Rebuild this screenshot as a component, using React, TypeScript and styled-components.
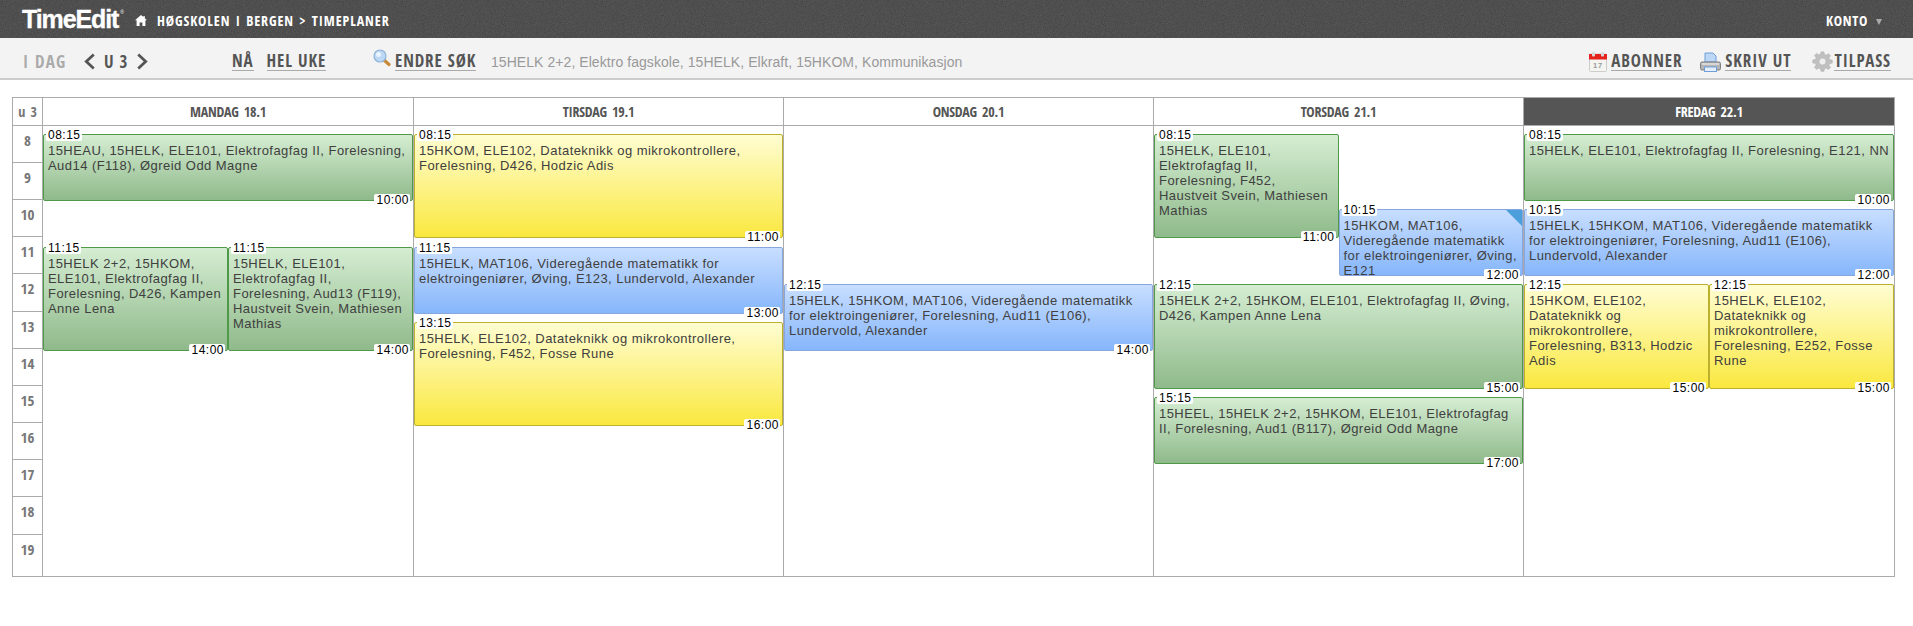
import React from "react";
import styled, { createGlobalStyle } from "styled-components";

const COND = `"Open Sans Condensed", "Liberation Sans Narrow", "Open Sans", sans-serif`;
const SANS = `"Liberation Sans", Arial, sans-serif`;

const Global = createGlobalStyle`
  html, body { margin: 0; padding: 0; background: #fff; }
  * { box-sizing: border-box; }
`;

const noise = `url("data:image/svg+xml,%3Csvg xmlns='http://www.w3.org/2000/svg' width='200' height='200'%3E%3Cfilter id='n'%3E%3CfeTurbulence type='fractalNoise' baseFrequency='1.1' numOctaves='2'/%3E%3CfeColorMatrix values='0 0 0 0 0 0 0 0 0 0 0 0 0 0 0 0 0 0 .35 -.07'/%3E%3C/filter%3E%3Crect width='200' height='200' filter='url(%23n)'/%3E%3C/svg%3E")`;

const Page = styled.div`
  width: 1913px;
  height: 626px;
  overflow: hidden;
  font-family: ${SANS};
`;
const TopBar = styled.header`
  height: 38px;
  background: #585858 ${noise};
  display: flex;
  align-items: center;
  padding: 3px 31px 0 22px;
  color: #fff;
`;
const Logo = styled.div`
  font: bold 25px/1 ${SANS};
  letter-spacing: -1.1px;
  -webkit-text-stroke: 0.3px #fff;
  width: 113px;
  margin-top: -3px;
  white-space: nowrap;
  sup { font-size: 5px; vertical-align: 14px; margin-left: 2px; font-weight: normal; letter-spacing: 0; -webkit-text-stroke: 0; }
`;
const Crumb = styled.div`
  font: bold 14px/1 ${COND};
  font-stretch: condensed;
  letter-spacing: 0.9px;
  margin-left: 10px;
  word-spacing: 1px;
`;
const Account = styled.div`
  margin-left: auto;
  display: flex;
  align-items: center;
  gap: 8px;
  font: bold 14px/1 ${COND};
  font-stretch: condensed;
  letter-spacing: 0.75px;
`;
const Caret = styled.span`
  width: 0;
  height: 0;
  margin-top: 3px;
  border-left: 3px solid transparent;
  border-right: 3px solid transparent;
  border-top: 6px solid #aaa;
`;
const Toolbar = styled.nav`
  height: 42px;
  background: #f3f3f3;
  border-bottom: 2px solid #ccc;
  display: flex;
  align-items: center;
  padding: 7px 22px 0 23px;
  font: bold 17px/1 ${COND};
  font-stretch: condensed;
  color: #555;
  letter-spacing: 0.9px;
`;
const Today = styled.span`
  color: #aaa;
  width: 60px;
  letter-spacing: 1.3px;
`;
const WeekNav = styled.span`
  display: flex;
  align-items: center;
  gap: 8px;
  width: 149px;
  color: #555;
`;
const Link = styled.span`
  border-bottom: 1px solid #aaa;
  padding-bottom: 1px;
`;
const LinkGroup = styled.span<{ $w: number; $gap?: number }>`
  display: flex;
  align-items: center;
  gap: ${(p) => p.$gap ?? 13}px;
  width: ${(p) => p.$w}px;
`;
const Desc = styled.span`
  font: 14px/1 ${SANS};
  color: #999;
  letter-spacing: 0.06px;
  margin-left: 13px;
`;
const Right = styled.div`
  margin-left: auto;
  display: flex;
  align-items: center;
  gap: 18px;
`;
const Tool = styled.span<{ $gap?: number; $before?: number }>`
  display: flex;
  align-items: center;
  gap: ${(p) => p.$gap ?? 4}px;
  margin-left: ${(p) => p.$before ?? 0}px;
  word-spacing: 0;
`;
const Table = styled.div`
  margin: 17px 0 0 12px;
  width: 1883px;
  border: 1px solid #aaa;
  display: grid;
  grid-template-columns: 29px 371px 370px 370px 370px 371px;
  grid-template-rows: 28px 450px;
`;
const HeadCell = styled.div<{ $first?: boolean; $active?: boolean }>`
  border-bottom: 1px solid #aaa;
  border-left: ${(p) => (p.$first ? "none" : "1px solid #aaa")};
  background: ${(p) => (p.$active ? "#555" : "#fff")};
  color: ${(p) => (p.$active ? "#fff" : p.$first ? "#777" : "#555")};
  display: flex;
  align-items: center;
  justify-content: center;
  font: bold 14px/1 ${COND};
  font-stretch: condensed;
  letter-spacing: -0.25px;
  word-spacing: 2px;
`;
const Hours = styled.div`
  display: flex;
  flex-direction: column;
`;
const Hour = styled.div<{ $h: number | null }>`
  ${(p) => (p.$h ? `height: ${p.$h}px;` : "flex: 1;")}
  border-bottom: ${(p) => (p.$h ? "1px solid #aaa" : "none")};
  color: #777;
  font: bold 15px/1 ${COND};
  font-stretch: condensed;
  text-align: center;
  padding-top: 7px;
`;
const Day = styled.div`
  border-left: 1px solid #aaa;
  position: relative;
`;
const colours = {
  green: { top: "#d5edd2", bottom: "#8fba8b", line: "#4f9a48" },
  yellow: { top: "#fffdd2", bottom: "#fae83f", line: "#bdb02c" },
  blue: { top: "#c8deff", bottom: "#86b6fb", line: "#88a6de" },
};
type Kind = keyof typeof colours;
const EventBox = styled.div<{ $k: Kind }>`
  position: absolute;
  border: 1px solid ${(p) => colours[p.$k].line};
  border-radius: 2px;
  background: linear-gradient(${(p) => colours[p.$k].top}, ${(p) => colours[p.$k].bottom});
`;
const EventText = styled.div`
  height: 100%;
  overflow: hidden;
  padding: 8px 3px 0 4px;
  font: 13px/15px ${SANS};
  color: #404040;
  letter-spacing: 0.45px;
`;
const Stamp = styled.span<{ $end?: boolean }>`
  position: absolute;
  background: #fff;
  color: #000;
  font: 12px/12px ${SANS};
  letter-spacing: 0.5px;
  padding: 0 1px 0 2px;
  border-radius: 2px;
  ${(p) => (p.$end ? "right: 2px; bottom: -6px;" : "left: 2px; top: -6px;")}
`;
const Corner = styled.span`
  position: absolute;
  top: 0;
  right: 0;
  width: 0;
  height: 0;
  border-top: 16px solid #4ba0dc;
  border-left: 16px solid transparent;
`;

const HomeIcon = () => (
  <svg width="12" height="11" viewBox="0 0 12 11"><path d="M6 0 0 5.200h1.600V11h3V7.400h2.800V11h3V5.200H12L9.800 3.300V1H8.400v1.100z" fill="#fff" /></svg>
);
const Chevron = ({ left }: { left?: boolean }) => (
  <svg width="13" height="17" viewBox="0 0 12 16" fill="none" stroke="#555" strokeWidth="2.6"><path d={left ? "M10 1.500 3 8l7 6.500" : "M2 1.500 9 8l-7 6.500"} /></svg>
);
const Magnifier = () => (
  <svg width="18" height="18" viewBox="0 0 18 18" style={{ marginTop: -7 }}>
    <path d="M10.500 10.500 16 15.500" stroke="#c98a3c" strokeWidth="3.2" strokeLinecap="round" />
    <circle cx="7" cy="7" r="6" fill="#bcd8f4" stroke="#8fb2d8" strokeWidth="1.2" />
    <circle cx="5.5" cy="5.5" r="2.5" fill="#e8f3fd" />
  </svg>
);
const CalendarIcon = () => (
  <svg width="18" height="20" viewBox="0 0 18 20">
    <rect x="0.5" y="2" width="17" height="17.5" rx="1" fill="#f4f4f0" stroke="#ccc" />
    <rect x="0" y="2" width="18" height="5.5" fill="#e5231c" />
    <rect x="3" y="0" width="3" height="4.5" rx="1" fill="#d8d8d8" />
    <rect x="12" y="0" width="3" height="4.5" rx="1" fill="#d8d8d8" />
    <text x="9" y="16" fontSize="7.5" fill="#999" textAnchor="middle" fontFamily="Liberation Sans">17</text>
  </svg>
);
const PrinterIcon = () => (
  <svg width="21" height="20" viewBox="0 0 21 20">
    <path d="M5 1h8l3 3v6H5z" fill="#bcd6f5" stroke="#6f9fda" />
    <path d="M2 10h17a1.500 1.500 0 0 1 1.500 1.500v5a1.500 1.500 0 0 1-1.500 1.500H2a1.500 1.500 0 0 1-1.500-1.500v-5A1.500 1.500 0 0 1 2 10z" fill="#b5b5b5" stroke="#7f7f7f" />
    <rect x="4.5" y="15" width="12" height="4.5" fill="#e6eef9" stroke="#6f9fda" />
    <rect x="2" y="11" width="17" height="2" fill="#d8d8d8" />
  </svg>
);
const GearIcon = () => (
  <svg width="21" height="21" viewBox="0 0 24 24" fill="#c0c0c0" stroke="#a8a8a8" strokeWidth="0.6">
    <path d="M10.300 1h3.400l.5 3 2 .8 2.500-1.800 2.400 2.400-1.800 2.500.8 2 3 .5v3.400l-3 .5-.8 2 1.800 2.500-2.400 2.400-2.500-1.800-2 .8-.5 3h-3.400l-.5-3-2-.8L5.300 21l-2.400-2.400 1.800-2.500-.8-2-3-.5V10.200l3-.5.8-2-1.800-2.500L5.300 2.800l2.500 1.800 2-.8z" />
    <circle cx="12" cy="12" r="4" fill="#efefef" />
  </svg>
);

type Ev = { d: number; s: number; e: number; k: Kind; t: string; slot?: 0 | 1; corner?: boolean };
const hh = (n: number) => `${String(Math.floor(n)).padStart(2, "0")}:${String(Math.round((n % 1) * 60)).padStart(2, "0")}`;
const events: Ev[] = [
  { d: 0, s: 8.25, e: 10, k: "green", t: "15HEAU, 15HELK, ELE101, Elektrofagfag II, Forelesning, Aud14 (F118), Øgreid Odd Magne" },
  { d: 0, s: 11.25, e: 14, k: "green", slot: 0, t: "15HELK 2+2, 15HKOM, ELE101, Elektrofagfag II, Forelesning, D426, Kampen Anne Lena" },
  { d: 0, s: 11.25, e: 14, k: "green", slot: 1, t: "15HELK, ELE101, Elektrofagfag II, Forelesning, Aud13 (F119), Haustveit Svein, Mathiesen Mathias" },
  { d: 1, s: 8.25, e: 11, k: "yellow", t: "15HKOM, ELE102, Datateknikk og mikrokontrollere, Forelesning, D426, Hodzic Adis" },
  { d: 1, s: 11.25, e: 13, k: "blue", t: "15HELK, MAT106, Videregående matematikk for elektroingeniører, Øving, E123, Lundervold, Alexander" },
  { d: 1, s: 13.25, e: 16, k: "yellow", t: "15HELK, ELE102, Datateknikk og mikrokontrollere, Forelesning, F452, Fosse Rune" },
  { d: 2, s: 12.25, e: 14, k: "blue", t: "15HELK, 15HKOM, MAT106, Videregående matematikk for elektroingeniører, Forelesning, Aud11 (E106), Lundervold, Alexander" },
  { d: 3, s: 8.25, e: 11, k: "green", slot: 0, t: "15HELK, ELE101, Elektrofagfag II, Forelesning, F452, Haustveit Svein, Mathiesen Mathias" },
  { d: 3, s: 10.25, e: 12, k: "blue", slot: 1, corner: true, t: "15HKOM, MAT106, Videregående matematikk for elektroingeniører, Øving, E121" },
  { d: 3, s: 12.25, e: 15, k: "green", t: "15HELK 2+2, 15HKOM, ELE101, Elektrofagfag II, Øving, D426, Kampen Anne Lena" },
  { d: 3, s: 15.25, e: 17, k: "green", t: "15HEEL, 15HELK 2+2, 15HKOM, ELE101, Elektrofagfag II, Forelesning, Aud1 (B117), Øgreid Odd Magne" },
  { d: 4, s: 8.25, e: 10, k: "green", t: "15HELK, ELE101, Elektrofagfag II, Forelesning, E121, NN" },
  { d: 4, s: 10.25, e: 12, k: "blue", t: "15HELK, 15HKOM, MAT106, Videregående matematikk for elektroingeniører, Forelesning, Aud11 (E106), Lundervold, Alexander" },
  { d: 4, s: 12.25, e: 15, k: "yellow", slot: 0, t: "15HKOM, ELE102, Datateknikk og mikrokontrollere, Forelesning, B313, Hodzic Adis" },
  { d: 4, s: 12.25, e: 15, k: "yellow", slot: 1, t: "15HELK, ELE102, Datateknikk og mikrokontrollere, Forelesning, E252, Fosse Rune" },
];
const days = ["MANDAG 18.1", "TIRSDAG 19.1", "ONSDAG 20.1", "TORSDAG 21.1", "FREDAG 22.1"];
const hours = [8, 9, 10, 11, 12, 13, 14, 15, 16, 17, 18, 19];
const PX = 37.6;
const place = (ev: Ev): React.CSSProperties => {
  const top = Math.round(8 + (ev.s - 8.25) * PX);
  const bottom = Math.round(8 + (ev.e - 8.25) * PX) + 1;
  return {
    top,
    height: bottom - top,
    left: ev.slot === 1 ? "50%" : 0,
    width: ev.slot === undefined ? "100%" : "50%",
  };
};

export default function App() {
  return (
    <Page>
      <Global />
      <TopBar>
        <Logo>TimeEdit<sup>®</sup></Logo>
        <HomeIcon />
        <Crumb>HØGSKOLEN I BERGEN &gt; TIMEPLANER</Crumb>
        <Account>KONTO <Caret /></Account>
      </TopBar>
      <Toolbar>
        <Today>I DAG</Today>
        <WeekNav><Chevron left /> U 3 <Chevron /></WeekNav>
        <LinkGroup $w={141}><Link>NÅ</Link><Link>HEL UKE</Link></LinkGroup>
        <LinkGroup $w={105} $gap={4}><Magnifier /><Link>ENDRE SØK</Link></LinkGroup>
        <Desc>15HELK 2+2, Elektro fagskole, 15HELK, Elkraft, 15HKOM, Kommunikasjon</Desc>
        <Right>
          <Tool><CalendarIcon /><Link>ABONNER</Link></Tool>
          <Tool><PrinterIcon /><Link>SKRIV UT</Link></Tool>
          <Tool $gap={1} $before={3}><GearIcon /><Link>TILPASS</Link></Tool>
        </Right>
      </Toolbar>
      <Table>
        <HeadCell $first>u 3</HeadCell>
        {days.map((d, i) => <HeadCell key={d} $active={i === 4}>{d}</HeadCell>)}
        <Hours>
          {hours.map((h, i) => <Hour key={h} $h={i === 11 ? null : i === 0 ? 36.8 : 37.2}>{h}</Hour>)}
        </Hours>
        {days.map((d, i) => (
          <Day key={d}>
            {events.filter((e) => e.d === i).map((e) => (
              <EventBox key={e.t + e.s} $k={e.k} style={place(e)}>
                <EventText>{e.t}</EventText>
                <Stamp>{hh(e.s)}</Stamp>
                <Stamp $end>{hh(e.e)}</Stamp>
                {e.corner && <Corner />}
              </EventBox>
            ))}
          </Day>
        ))}
      </Table>
    </Page>
  );
}
